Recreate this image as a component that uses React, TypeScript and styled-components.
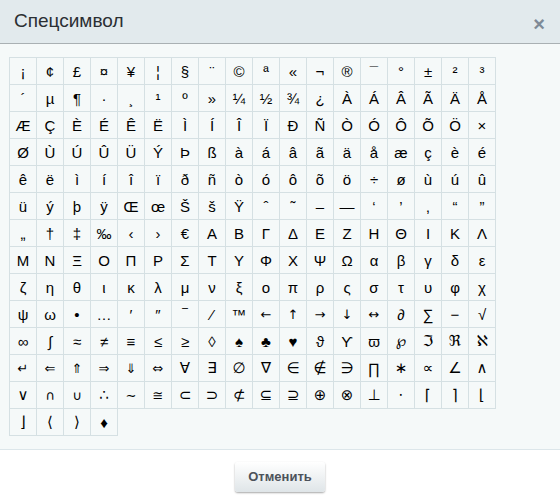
import styled, { createGlobalStyle } from "styled-components";

const GlobalStyle = createGlobalStyle`
  html, body {
    margin: 0;
    padding: 0;
    background: #ffffff;
    font-family: "Liberation Sans", Arial, sans-serif;
  }
`;

const Dialog = styled.div`
  width: 560px;
  height: 498px;
  display: flex;
  flex-direction: column;
  background: #ffffff;
`;

const Header = styled.div`
  height: 43px;
  flex: none;
  display: flex;
  align-items: center;
  justify-content: space-between;
  padding: 0 15px 0 14px;
  background: #e2eaed;
  border-bottom: 1px solid #a9b0b3;
`;

const Title = styled.h2`
  margin: 0;
  font-size: 19px;
  font-weight: normal;
  color: #2b2f33;
  padding-bottom: 2px;
`;

const Close = styled.span`
  font-size: 20px;
  line-height: 1;
  color: #7e8a97;
  font-weight: bold;
  cursor: pointer;
  margin-top: 4px;
`;

const Body = styled.div`
  flex: 1;
  background: #f5f9f9;
  padding: 13px 9px;
  border-bottom: 1px solid #dce6ea;
`;

const Grid = styled.div`
  display: grid;
  grid-template-columns: repeat(18, 27px);
  grid-auto-rows: 27px;
  width: fit-content;
  border-top: 1px solid #d5e0e3;
  border-left: 1px solid #d5e0e3;
`;

const Cell = styled.div<{ $alt?: boolean }>`
  display: flex;
  align-items: center;
  justify-content: center;
  border-right: 1px solid #d5e0e3;
  border-bottom: 1px solid #d5e0e3;
  font-family: ${({ $alt }) =>
    $alt
      ? `"DejaVu Sans", sans-serif`
      : `"Liberation Sans", "DejaVu Sans", Arial, sans-serif`};
  font-size: ${({ $alt }) => ($alt ? "13px" : "15px")};
  color: #000;
  cursor: pointer;
  &:hover {
    background: #ffffff;
  }
`;

const Footer = styled.div`
  height: 50px;
  flex: none;
  display: flex;
  align-items: center;
  justify-content: center;
`;

const Button = styled.button`
  height: 30px;
  padding: 0 13px;
  margin-top: 3px;
  border: none;
  border-radius: 3px;
  background: linear-gradient(#ffffff, #dfe5e8);
  box-shadow: 0 1px 2px rgba(0, 0, 0, 0.35);
  font-family: "Liberation Sans", Arial, sans-serif;
  font-size: 13px;
  font-weight: bold;
  color: #4c525a;
  cursor: pointer;
`;

const symbols =
  "¡¢£¤¥¦§¨©ª«¬®¯°±²³" +
  "´µ¶·¸¹º»¼½¾¿ÀÁÂÃÄÅ" +
  "ÆÇÈÉÊËÌÍÎÏÐÑÒÓÔÕÖ×" +
  "ØÙÚÛÜÝÞßàáâãäåæçèé" +
  "êëìíîïðñòóôõö÷øùúû" +
  "üýþÿŒœŠšŸˆ˜–—‘’‚“”" +
  "„†‡‰‹›€ΑΒΓΔΕΖΗΘΙΚΛ" +
  "ΜΝΞΟΠΡΣΤΥΦΧΨΩαβγδε" +
  "ζηθικλμνξοπρςστυφχ" +
  "ψω•…′″‾⁄™←↑→↓↔∂∑−√" +
  "∞∫≈≠≡≤≥◊♠♣♥ϑϒϖ℘ℑℜℵ" +
  "↵⇐⇑⇒⇓⇔∀∃∅∇∈∉∋∏∗∝∠∧" +
  "∨∩∪∴∼≅⊂⊃⊄⊆⊇⊕⊗⊥⋅⌈⌉⌊" +
  "⌋⟨⟩♦";

// arrows and a few math marks look closer to the original in DejaVu
const altFont = new Set(Array.from("←↑→↓↔↵⇐⇑⇒⇓⇔∩∪∼≅"));

const App = () => {
  const chars = Array.from(symbols);
  return (
    <>
      <GlobalStyle />
      <Dialog>
        <Header>
          <Title>Спецсимвол</Title>
          <Close>×</Close>
        </Header>
        <Body>
          <Grid>
            {chars.map((ch, i) => (
              <Cell key={i} $alt={altFont.has(ch)}>
                {ch}
              </Cell>
            ))}
          </Grid>
        </Body>
        <Footer>
          <Button>Отменить</Button>
        </Footer>
      </Dialog>
    </>
  );
};

export default App;
